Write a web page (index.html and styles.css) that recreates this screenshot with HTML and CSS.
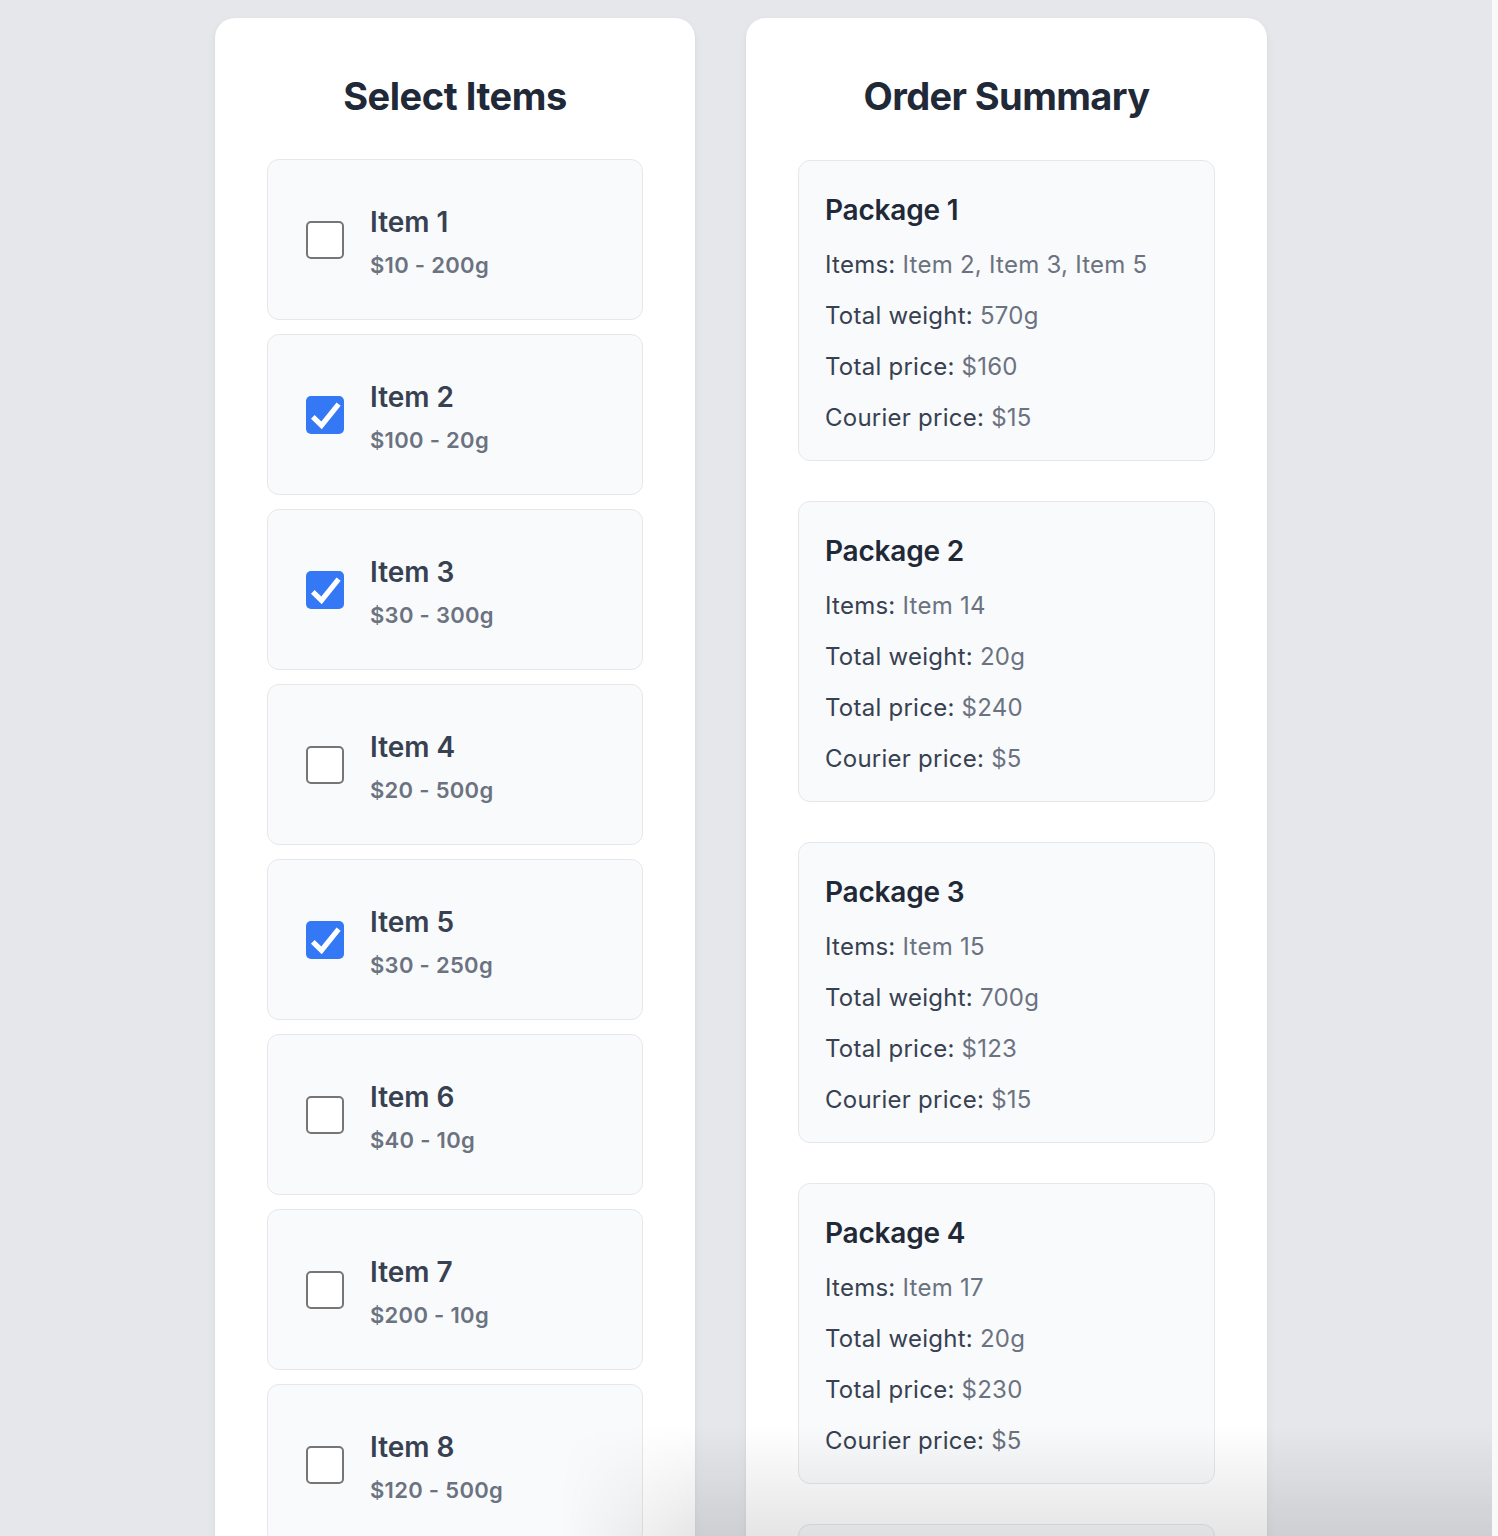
FILE: index.html
```
<!DOCTYPE html>
<html lang="en">
<head>
    <meta charset="UTF-8">
    <meta name="viewport" content="width=device-width, initial-scale=1.0">
    <title>Courier packages</title>
    <link rel="stylesheet" href="styles.css">
</head>
<body>
    <div class="page">
        <!-- Items list -->
        <section class="panel panel-items">
            <h1>Select Items</h1>
            <div class="item-list">
                <label class="item">
                    <span class="box"></span>
                    <span class="item-text">
                        <span class="item-name">Item 1</span>
                        <span class="item-meta">$10 - 200g</span>
                    </span>
                </label>
                <label class="item">
                    <span class="box checked"><svg viewBox="0 0 24 24"><path d="M4.3 13.2L9.8 18.6L20.6 5.2"/></svg></span>
                    <span class="item-text">
                        <span class="item-name">Item 2</span>
                        <span class="item-meta">$100 - 20g</span>
                    </span>
                </label>
                <label class="item">
                    <span class="box checked"><svg viewBox="0 0 24 24"><path d="M4.3 13.2L9.8 18.6L20.6 5.2"/></svg></span>
                    <span class="item-text">
                        <span class="item-name">Item 3</span>
                        <span class="item-meta">$30 - 300g</span>
                    </span>
                </label>
                <label class="item">
                    <span class="box"></span>
                    <span class="item-text">
                        <span class="item-name">Item 4</span>
                        <span class="item-meta">$20 - 500g</span>
                    </span>
                </label>
                <label class="item">
                    <span class="box checked"><svg viewBox="0 0 24 24"><path d="M4.3 13.2L9.8 18.6L20.6 5.2"/></svg></span>
                    <span class="item-text">
                        <span class="item-name">Item 5</span>
                        <span class="item-meta">$30 - 250g</span>
                    </span>
                </label>
                <label class="item">
                    <span class="box"></span>
                    <span class="item-text">
                        <span class="item-name">Item 6</span>
                        <span class="item-meta">$40 - 10g</span>
                    </span>
                </label>
                <label class="item">
                    <span class="box"></span>
                    <span class="item-text">
                        <span class="item-name">Item 7</span>
                        <span class="item-meta">$200 - 10g</span>
                    </span>
                </label>
                <label class="item">
                    <span class="box"></span>
                    <span class="item-text">
                        <span class="item-name">Item 8</span>
                        <span class="item-meta">$120 - 500g</span>
                    </span>
                </label>
            </div>
        </section>

        <!-- Summary -->
        <section class="panel panel-summary">
            <h1>Order Summary</h1>
            <div class="package-list">
                <div class="package">
                    <h2>Package 1</h2>
                    <p>Items: <span>Item 2, Item 3, Item 5</span></p>
                    <p>Total weight: <span>570g</span></p>
                    <p>Total price: <span>$160</span></p>
                    <p>Courier price: <span>$15</span></p>
                </div>
                <div class="package">
                    <h2>Package 2</h2>
                    <p>Items: <span>Item 14</span></p>
                    <p>Total weight: <span>20g</span></p>
                    <p>Total price: <span>$240</span></p>
                    <p>Courier price: <span>$5</span></p>
                </div>
                <div class="package">
                    <h2>Package 3</h2>
                    <p>Items: <span>Item 15</span></p>
                    <p>Total weight: <span>700g</span></p>
                    <p>Total price: <span>$123</span></p>
                    <p>Courier price: <span>$15</span></p>
                </div>
                <div class="package">
                    <h2>Package 4</h2>
                    <p>Items: <span>Item 17</span></p>
                    <p>Total weight: <span>20g</span></p>
                    <p>Total price: <span>$230</span></p>
                    <p>Courier price: <span>$5</span></p>
                </div>
                <!-- next package only shows its top edge -->
                <div class="package package-empty"></div>
            </div>
        </section>
    </div>

    <div class="shade"></div>
    <div class="scroll-track"></div>
</body>
</html>
```

FILE: styles.css
```
html, body {
    height: 100%;
    overflow: hidden;
}

body {
    margin: 0;
    background-color: #e5e7eb;
    font-family: Inter, "Noto Sans", sans-serif;
    color: #374151;
}

.page {
    display: flex;
    align-items: flex-start;
    gap: 51px;
    padding: 18px 0 0 215px;
}

/* big white panels */
.panel {
    background: #fff;
    border-radius: 20px;
    box-shadow: 0 4px 10px rgba(0, 0, 0, 0.05), 0 1px 3px rgba(0, 0, 0, 0.04);
    padding: 52px 52px 60px;
    box-sizing: border-box;
}

.panel-items { width: 480px; }
.panel-summary { width: 521px; }

.panel h1 {
    margin: 0 0 37px;
    text-align: center;
    font-size: 38px;
    line-height: 52px;
    font-weight: 700;
    color: #1f2937;
    letter-spacing: -0.45px;
}

.panel-summary h1 {
    margin-bottom: 38px;
    letter-spacing: -0.6px;
}

/* item cards */
.item-list {
    display: flex;
    flex-direction: column;
    gap: 14px;
}

.item {
    display: flex;
    align-items: center;
    gap: 26px;
    height: 161px;
    box-sizing: border-box;
    padding-left: 38px;
    background: #f9fafb;
    border: 1px solid #e5e7eb;
    border-radius: 12px;
    cursor: pointer;
}

.box {
    width: 38px;
    height: 38px;
    box-sizing: border-box;
    flex-shrink: 0;
    background: #fff;
    border: 2px solid #767676;
    border-radius: 5px;
}

.box.checked {
    background: #3478f6;
    border: none;
}

.box svg {
    display: block;
    width: 38px;
    height: 38px;
    fill: none;
    stroke: #fff;
    stroke-width: 3.3;
}

.item-text {
    display: flex;
    flex-direction: column;
    padding-top: 5px;
}

.item-name {
    font-size: 28px;
    line-height: 34px;
    font-weight: 600;
    color: #374151;
}

.item-meta {
    margin-top: 12px;
    font-size: 22px;
    line-height: 28px;
    font-weight: 600;
    color: #6b7280;
    letter-spacing: 0.3px;
}

/* package cards */
.package-list {
    display: flex;
    flex-direction: column;
    gap: 40px;
}

.package {
    display: flex;
    flex-direction: column;
    gap: 15px;
    padding: 32px 26px 24px;
    background: #f9fafb;
    border: 1px solid #e5e7eb;
    border-radius: 12px;
}

.package-empty { height: 240px; }

.package h2 {
    margin: 0 0 5px;
    font-size: 28px;
    line-height: 34px;
    font-weight: 600;
    color: #1f2937;
    letter-spacing: -0.2px;
}

.package p {
    margin: 0;
    font-size: 24px;
    line-height: 36px;
    color: #374151;
    letter-spacing: 0.25px;
}

.package p span { color: #6b7280; }

/* bottom shadow over the page */
.shade {
    position: fixed;
    left: 560px;
    right: 0;
    bottom: 0;
    height: 110px;
    pointer-events: none;
    background: linear-gradient(to bottom, rgba(0, 0, 0, 0), rgba(0, 0, 0, 0.1));
    -webkit-mask-image: linear-gradient(to right, transparent, #000 140px);
    mask-image: linear-gradient(to right, transparent, #000 140px);
}

.scroll-track {
    position: fixed;
    top: 0;
    right: 0;
    bottom: 0;
    width: 6px;
    background: #f9f9f9;
}
```
